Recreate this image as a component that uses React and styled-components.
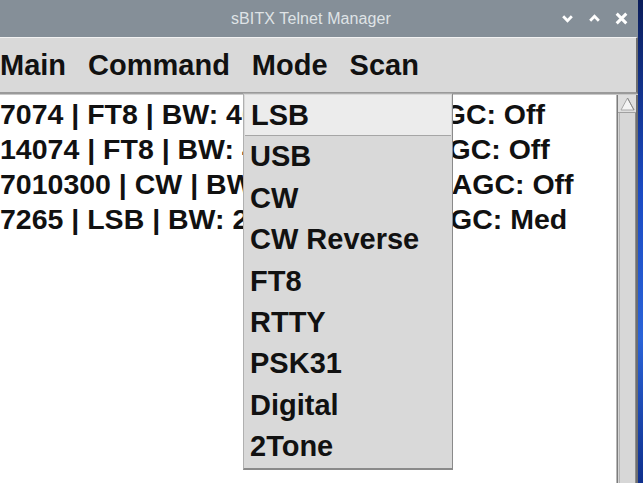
import React from "react";
import styled, { createGlobalStyle } from "styled-components";

const GlobalStyle = createGlobalStyle`
  html, body {
    margin: 0;
    padding: 0;
    width: 643px;
    height: 483px;
    overflow: hidden;
    background: linear-gradient(180deg, #0b1d5a 0%, #1b4bc4 40%, #2a63d8 70%, #0f2f8c 100%);
  }
  #root {
    width: 643px;
    height: 483px;
  }
`;

const MODES = ["LSB", "USB", "CW", "CW Reverse", "FT8", "RTTY", "PSK31", "Digital", "2Tone"];

const LINES = [
  "7074 | FT8 | BW: 4000 | RF: 50 | AGC: Off",
  "14074 | FT8 | BW: 4000 | RIT: 0 | AGC: Off",
  "7010300 | CW | BW: 500 | RF: 50 | AGC: Off",
  "7265 | LSB | BW: 2400 | RF: 50 | AGC: Med",
];

export default function App() {
  return (
    <>
      <GlobalStyle />
      <Window>
        <TitleBar>
          <Title>sBITX Telnet Manager</Title>
          <Controls>
            <CtrlButton aria-label="minimize">
              <svg width="13" height="13" viewBox="0 0 12 12">
                <path d="M2 4 L6 8 L10 4" fill="none" stroke="#fff" strokeWidth="2.6" />
              </svg>
            </CtrlButton>
            <CtrlButton aria-label="maximize">
              <svg width="13" height="13" viewBox="0 0 12 12">
                <path d="M2 8 L6 4 L10 8" fill="none" stroke="#fff" strokeWidth="2.6" />
              </svg>
            </CtrlButton>
            <CtrlButton aria-label="close">
              <svg width="15" height="15" viewBox="0 0 14 14">
                <path d="M2.5 2.5 L11.5 11.5 M11.5 2.5 L2.5 11.5" fill="none" stroke="#fff" strokeWidth="2.8" />
              </svg>
            </CtrlButton>
          </Controls>
        </TitleBar>

        <MenuBar>
          <MenuItem>Main</MenuItem>
          <MenuItem>Command</MenuItem>
          <MenuItem>Mode</MenuItem>
          <MenuItem>Scan</MenuItem>
        </MenuBar>

        <Body>
          <Output>
            {LINES.map((l) => (
              <Line key={l}>{l}</Line>
            ))}
          </Output>
          <ScrollBar>
            <ScrollArrow>
              <svg width="17" height="16" viewBox="0 0 17 16">
                <path d="M8.5 2 L15 14 L2 14 Z" fill="#f4f4f4" stroke="#a8a8a8" strokeWidth="1" />
                <path d="M8.5 2 L15 14" fill="none" stroke="#8a8a8a" strokeWidth="1" />
              </svg>
            </ScrollArrow>
            <ScrollThumb />
          </ScrollBar>
        </Body>

        <Dropdown>
          {MODES.map((m, i) => (
            <DropItem key={m} $active={i === 0}>
              {m}
            </DropItem>
          ))}
        </Dropdown>
      </Window>
    </>
  );
}

const Window = styled.div`
  position: relative;
  width: 638px;
  height: 483px;
  display: flex;
  flex-direction: column;
  background: #d9d9d9;
  font-family: "Liberation Sans", Arial, sans-serif;
`;

const TitleBar = styled.div`
  height: 37px;
  flex: none;
  background: #858f98;
  display: flex;
  align-items: center;
  justify-content: center;
  position: relative;
  padding-right: 16px;
`;

const Title = styled.div`
  font-family: "Liberation Sans", Arial, sans-serif;
  font-size: 16px;
  color: #dfe3e6;
  letter-spacing: 0.1px;
`;

const Controls = styled.div`
  position: absolute;
  right: 9px;
  top: 0;
  height: 37px;
  display: flex;
  align-items: center;
  gap: 11px;
`;

const CtrlButton = styled.div`
  width: 16px;
  height: 16px;
  display: flex;
  align-items: center;
  justify-content: center;
`;

const MenuBar = styled.div`
  height: 54px;
  flex: none;
  display: flex;
  align-items: center;
  gap: 22px;
  background: #d9d9d9;
  border-top: 1px solid #f2f2f2;
  border-bottom: 2px solid #9a9a9a;
  border-right: 2px solid #6e6e6e;
`;

const MenuItem = styled.div`
  font-size: 29px;
  font-weight: bold;
  color: #111;
  line-height: 54px;
`;

const Body = styled.div`
  flex: 1;
  display: flex;
  min-height: 0;
  border-top: 1px solid #c8c8c8;
`;

const Output = styled.div`
  flex: 1;
  background: #fff;
  padding-top: 2px;
  overflow: hidden;
  border-right: 1px solid #b8b8b8;
`;

const Line = styled.div`
  font-size: 28.5px;
  font-weight: bold;
  line-height: 35px;
  color: #111;
  white-space: nowrap;
`;

const ScrollBar = styled.div`
  width: 18px;
  flex: none;
  display: flex;
  flex-direction: column;
  background: #d4d4d4;
  border-left: 1px solid #7c7c7c;
  border-right: 2px solid #6e6e6e;
`;

const ScrollArrow = styled.div`
  height: 17px;
  display: flex;
  align-items: center;
  justify-content: center;
  background: #dedede;
  border-bottom: 1px solid #a0a0a0;
`;

const ScrollThumb = styled.div`
  flex: 1;
  margin: 0 0 0 1px;
  background: #d7d7d7;
  border-left: 1px solid #b4b4b4;
  border-right: 1px solid #8c8c8c;
`;

const Dropdown = styled.div`
  position: absolute;
  left: 243px;
  top: 93px;
  width: 208px;
  background: #d9d9d9;
  border: 1px solid #b0b0b0;
  border-right-color: #8a8a8a;
  border-bottom: 2px solid #8a8a8a;
  padding-top: 1px;
`;

const DropItem = styled.div`
  height: 41.4px;
  line-height: 41.4px;
  padding-left: 6px;
  font-size: 29px;
  font-weight: bold;
  color: #111;
  box-sizing: border-box;
  background: ${(p) => (p.$active ? "#ececec" : "transparent")};
  border-bottom: ${(p) => (p.$active ? "1px solid #a6a6a6" : "none")};
  margin: ${(p) => (p.$active ? "0 1px 0 1px" : "0")};
`;
